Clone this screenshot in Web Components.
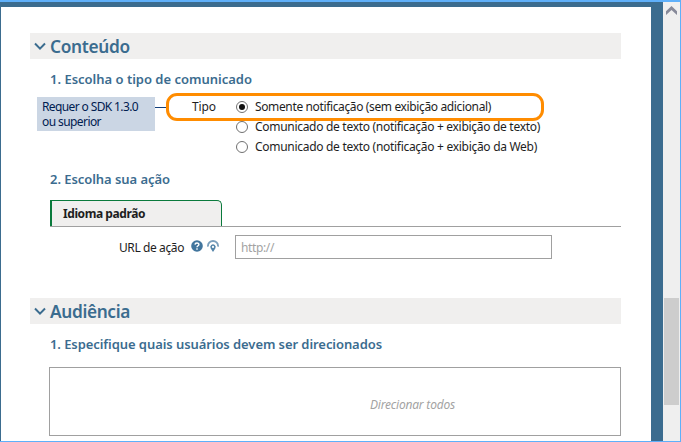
<!DOCTYPE html>
<html lang="pt">
<head>
<meta charset="utf-8">
<title>Comunicado</title>
<style>
html,body{margin:0;height:100%;overflow:hidden;background:#fff}
body{font-family:"Noto Sans","Open Sans",sans-serif;font-size:12px;color:#1e1e1e}
</style>
</head>
<body>
<app-window>
  <form-section heading="Conteúdo">
    <step-title width="202" style="--mt:10px">1. Escolha o tipo de comunicado</step-title>
    <type-picker></type-picker>
    <step-title width="120" style="--mt:12px">2. Escolha sua ação</step-title>
    <tab-strip></tab-strip>
    <url-field></url-field>
  </form-section>
  <form-section heading="Audiência">
    <step-title width="332" style="--mt:10px">1. Especifique quais usuários devem ser direcionados</step-title>
    <audience-box></audience-box>
  </form-section>
</app-window>
<script>
function define(name, html, setup) {
  const template = document.createElement('template');
  template.innerHTML = html;
  customElements.define(name, class extends HTMLElement {
    connectedCallback() {
      if (this.shadowRoot) return;
      this.attachShadow({ mode: 'open' }).append(template.content.cloneNode(true));
      if (setup) setup(this, this.shadowRoot);
    }
  });
}

// One line of text tracked to occupy the width given in pixels.
define('fit-text', `<style>:host{display:inline-block;white-space:nowrap}span{display:inline-block}</style><span><slot></slot></span>`,
  (host, root) => {
    const span = root.querySelector('span');
    const n = host.textContent.length;
    const w = +host.getAttribute('width');
    span.style.letterSpacing = (w - span.getBoundingClientRect().width) / n + 'px';
    host.style.width = w + 'px';
  });

define('scroll-bar', `<style>
:host{display:flex;flex-direction:column;width:17px;box-sizing:border-box;background:#efefef;padding:4px 1px 36px;align-items:stretch}
svg{display:block;width:11px;height:10px;margin:0 0 0 2px}
i{display:block;height:107px;margin-top:auto;background:#cdcdcd}
</style><svg viewBox="0 0 11 10"><path d="M0 5.2 5.5 0 11 5.2V9L5.5 4 0 9z" fill="#868999"/></svg><i></i>`);

define('app-window', `<style>
:host{display:flex;box-sizing:border-box;width:681px;height:442px;border:solid #5fb0fa;border-width:2px 1px 1px 0;background:#3b6c8f;overflow:hidden}
main{box-sizing:border-box;width:650px;margin:5px 12px 0 1px;background:#fff;padding:26px 30px 0 29px}
</style><main><slot></slot></main><scroll-bar></scroll-bar>`);

define('form-section', `<style>
:host{display:block;height:265px}
header{display:flex;align-items:center;box-sizing:border-box;height:26px;padding-top:2px;background:#f0efee;color:#3b6c8f;font-size:17.3px;font-weight:600;line-height:24px}
svg{width:12px;height:9px;margin:0 4px 1px 4px}
</style><header><svg viewBox="0 0 12 9"><path d="M1 1.5 6 6.6 11 1.5" fill="none" stroke="#3b6c8f" stroke-width="2"/></svg></header><slot></slot>`,
  (host, root) => {
    const t = document.createElement('fit-text');
    t.setAttribute('width', '80');
    t.textContent = host.getAttribute('heading');
    root.querySelector('header').append(t);
  });

define('step-title', `<style>
:host{display:block;height:20px;line-height:20px;margin:var(--mt) 0 0 20px;color:#3b6c8f;font-size:13px;font-weight:600}
</style>`, (host, root) => {
    const t = document.createElement('fit-text');
    t.setAttribute('width', host.getAttribute('width'));
    t.textContent = host.textContent;
    root.append(t);
  });

define('radio-option', `<style>
:host{display:flex;align-items:center;height:20px;line-height:20px;gap:7px}
svg{width:12px;height:12px;flex:none}
circle.dot{display:none}
:host([checked]) circle.dot{display:block}
</style><svg viewBox="0 0 12 12"><circle cx="6" cy="6" r="5.5" fill="#fff" stroke="#707070"/><circle class="dot" cx="6" cy="6" r="3" fill="#111"/></svg><slot></slot>`);

define('type-picker', `<style>
:host{display:grid;grid-template-columns:118px 37px 44px 1fr;margin:8px 0 0 7px;height:60px;position:relative}
.note{background:#cbd6e4;color:#002050;height:34px;line-height:15px;box-sizing:border-box;padding:2px 0 0 5px;display:flex;flex-direction:column}
.note fit-text{height:15px}
.link{height:1px;width:12px;background:#123f7c;margin-top:10px}
.tipo{line-height:20px}
.ring{position:absolute;left:129px;top:-4px;width:378px;height:28px;box-sizing:border-box;border:3px solid #ff8c00;border-radius:11px}
</style>
<div class="note"><fit-text width="96">Requer o SDK 1.3.0</fit-text><fit-text width="59">ou superior</fit-text></div>
<div class="link"></div>
<fit-text class="tipo" width="24">Tipo</fit-text>
<div>
<radio-option checked><fit-text width="236">Somente notificação (sem exibição adicional)</fit-text></radio-option>
<radio-option><fit-text width="285">Comunicado de texto (notificação + exibição de texto)</fit-text></radio-option>
<radio-option><fit-text width="282">Comunicado de texto (notificação + exibição da Web)</fit-text></radio-option>
</div>
<div class="ring"></div>`);

define('tab-strip', `<style>
:host{display:block;margin:11px 0 0 20px;border-bottom:1px solid #a0a0a0}
div{box-sizing:border-box;width:172px;height:26px;line-height:26px;background:#f0efee;border:solid #0a7a3c;border-width:1px 1px 0 2px;border-top-right-radius:5px;padding-left:11px;font-weight:700}
</style><div><fit-text width="82">Idioma padrão</fit-text></div>`);

define('url-field', `<style>
:host{display:flex;align-items:center;height:24px;margin:8px 0 0 89px}
svg{width:12px;height:12px;flex:none;margin-bottom:2px}
svg.q{margin-left:7px}svg.p{margin-left:4px;margin-right:16px}
.in{box-sizing:border-box;width:317px;height:24px;line-height:23px;border:1px solid #a0a0a0;padding-left:5px;color:#a3a3a3}
</style><fit-text width="65">URL de ação</fit-text>
<svg class="q" viewBox="0 0 12 12"><circle cx="6" cy="6" r="5.8" fill="#41759d"/><path d="M4 4.6C4.1 2.5 7.9 2.5 7.9 4.5 7.9 5.8 6 5.7 6 7.3M6 8.3V9.7" fill="none" stroke="#fff" stroke-width="1.4"/></svg>
<svg class="p" viewBox="0 0 12 12"><path d="M.9 6.6C.6-.9 11.4-.9 11.1 6.6" fill="none" stroke="#7ba0bd" stroke-width="1.8"/><path d="M6 12 3.7 8.4A2.7 2.7 0 1 1 8.3 8.4z" fill="#5485a9"/><circle cx="6" cy="6.9" r="1.1" fill="#fff"/></svg>
<div class="in"><fit-text width="33">http://</fit-text></div>`);

define('audience-box', `<style>
:host{display:flex;align-items:center;box-sizing:border-box;height:69px;margin:13px 0 0 19px;border:1px solid #a0a0a0;padding:5px 0 0 320px;color:#a3a3a3;font-style:italic}
</style><fit-text width="85">Direcionar todos</fit-text>`);
</script>
</body>
</html>
